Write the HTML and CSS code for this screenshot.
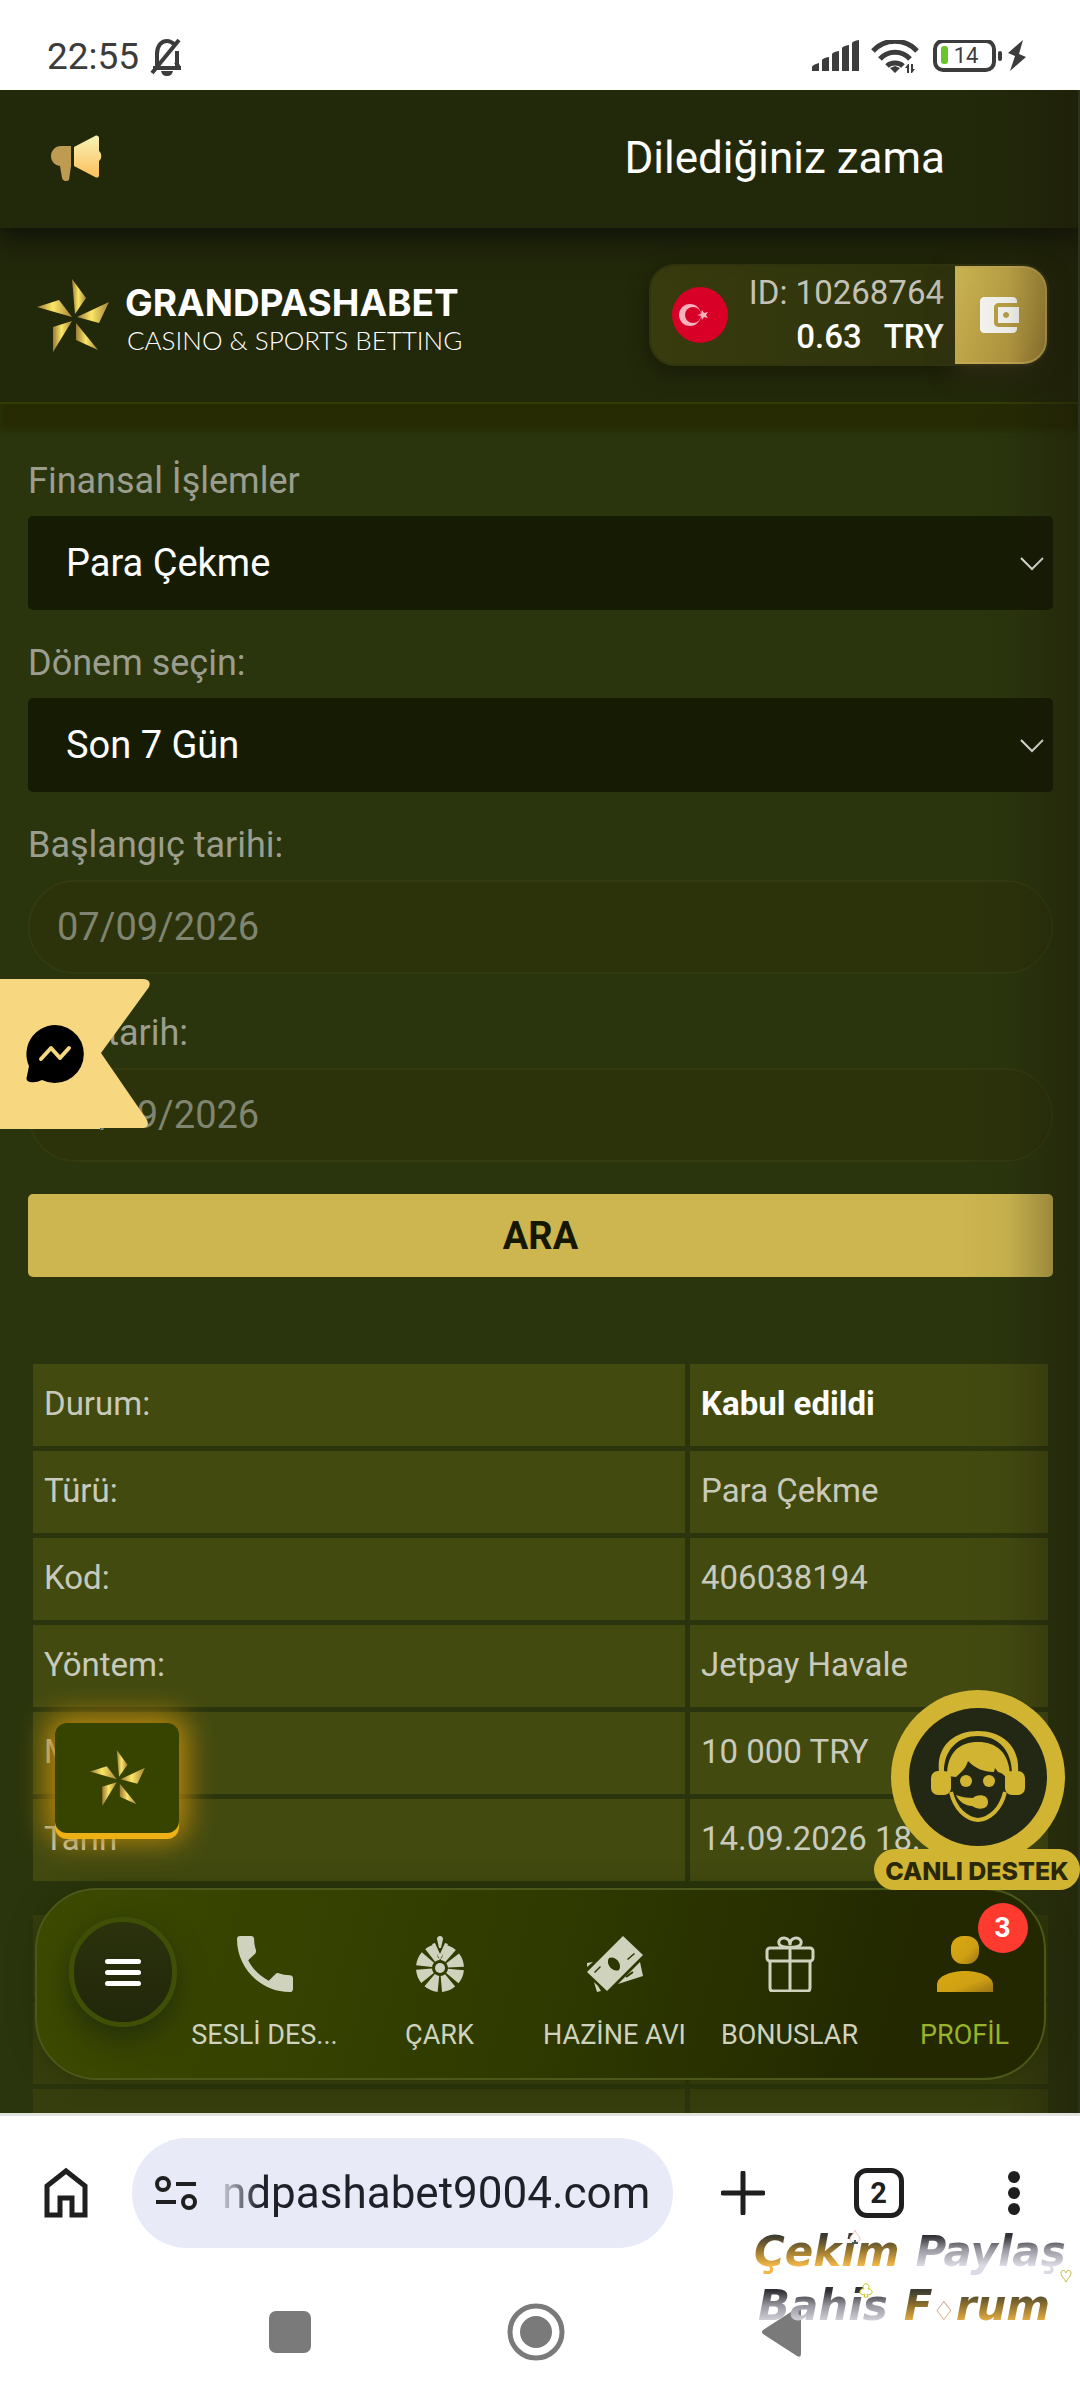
FILE: index.html
```html
<!DOCTYPE html>
<html lang="tr">
<head>
<meta charset="utf-8">
<meta name="viewport" content="width=device-width, initial-scale=1">
<title>Grandpashabet</title>
<link rel="stylesheet" href="styles.css">
</head>
<body>
<svg class="defs" aria-hidden="true">
  <defs>
    <linearGradient id="gold" x1="0" x2="1" y1="0" y2="0"><stop offset="0" stop-color="#9c7a35"/><stop offset=".45" stop-color="#fbe766"/><stop offset="1" stop-color="#a98338"/></linearGradient>
    <linearGradient id="horn" x1="0" x2="0" y1="0" y2="1"><stop offset="0" stop-color="#f7f3b5"/><stop offset="1" stop-color="#fdbf5c"/></linearGradient>
    <linearGradient id="person" x1="0" x2="1" y1="0" y2="1"><stop offset="0" stop-color="#d9a812"/><stop offset=".6" stop-color="#cfa013"/><stop offset="1" stop-color="#9a7414"/></linearGradient>
    <symbol id="star" viewBox="0 0 72 73">
      <path fill="url(#gold)" d="M35 0 49 19 38 35Z"/><path fill="url(#gold)" d="M72 23 62 44 40 38Z"/><path fill="url(#gold)" d="M39 44 61 71 39 61Z"/><path fill="url(#gold)" d="M35 42 16 48V73Z"/><path fill="url(#gold)" d="M0 28 22 21 35 38Z"/>
    </symbol>
  </defs>
</svg>
<div class="phone">
  <header class="status">
    <span class="status-time">22:55</span>
    <svg class="bell" viewBox="0 0 36 40" width="36" height="40"><path d="M8 29V17c0-8 4-13 10-13 3 0 6 2 8 4M28 14v15M4 31h28M30 31l-3-6M30 3 3 36" fill="none" stroke="#3c3c3c" stroke-width="4"/><path d="M12 34h12c-1 4-3 5-6 5s-5-1-6-5Z" fill="#3c3c3c"/></svg>
    <svg class="status-icons" viewBox="0 0 216 34" width="216" height="34" fill="#3c3c3c">
      <path d="M0 31v-4q0-2 7-4v8ZM10 31V20q1-2 7-3v14ZM20 31V14q1-2 7-3v20ZM30 31V8q1-2 7-3v26ZM40 31V3q1-2 7-3v31Z"/>
      <g fill="none" stroke="#3c3c3c" stroke-width="5"><path d="M61 11c12-13 32-13 44 0M68 19c8-9 22-9 30 0M75 26c4-4 12-4 16 0"/></g>
      <path d="m78 28 5-2 5 2-5 5ZM96 24l-3 4h2v5h2V24ZM100 33l3-4h-2v-5h-2v9Z"/>
      <rect x="123" y="1" width="59" height="29" rx="8" fill="none" stroke="#3c3c3c" stroke-width="4"/><rect x="129" y="6" width="7" height="18" rx="3" fill="#6cc42c"/><rect x="186" y="11" width="4" height="10" rx="2"/>
      <text x="154" y="23" text-anchor="middle" font-family="Roboto, sans-serif" font-size="22">14</text>
      <path d="m211 0-15 13 7 3-5 15 16-14-7-3Z"/>
    </svg>
  </header>

  <main class="site">
    <div class="ticker">
      <svg viewBox="0 0 52 46" width="52" height="46"><path fill="#bd9b50" d="M10 11h10v20l-2 14c-3 2-6 1-7-2L9 31C3 30 0 26 0 21S4 11 10 11Z"/><path fill="url(#horn)" d="M23 12 44 1c2-1 4 0 4 2v13c3 2 3 8 0 10v14c0 3-2 3-4 2L23 31Z"/></svg>
      <span>Dilediğiniz zama</span>
    </div>
    <div class="brandbar">
      <a class="brand" href="#">
        <svg width="72" height="73"><use href="#star"/></svg>
        <span class="brand-text"><strong>GRANDPASHABET</strong><small>CASINO &amp; SPORTS BETTING</small></span>
      </a>
      <div class="account">
        <svg class="flag" viewBox="0 0 56 56" width="56" height="56"><circle cx="28" cy="28" r="28" fill="#d80027"/><circle cx="18" cy="28" r="11" fill="#f6b3bd"/><circle cx="21" cy="28" r="8" fill="#d80027"/><path fill="#f6b3bd" d="m25 28 4-1 1-4 2 3 4-1-2 3 2 3-4-1-2 3-1-4Z"/></svg>
        <span class="account-text"><span class="uid">ID: 10268764</span><span class="money"><b>0.63</b><b>TRY</b></span></span>
        <button class="wallet" aria-label="Cüzdan"><svg viewBox="0 0 40 36" width="40" height="36" fill="#f6f6f2"><path d="M4 0h29c2 0 4 2 4 4v2H19c-3 0-5 2-5 4v16c0 2 2 4 5 4h18v2c0 2-2 4-4 4H4c-2 0-4-2-4-4V4c0-2 2-4 4-4Z"/><path fill-rule="evenodd" d="M18 10h21v16H18Zm8 5a3 3 0 1 0 .1 0Z"/></svg></button>
      </div>
    </div>

    <form class="filter">
      <label for="op">Finansal İşlemler</label>
      <div class="select"><select id="op"><option>Para Çekme</option></select><svg viewBox="0 0 24 14" width="24" height="14"><path d="m1 1 11 11L23 1"/></svg></div>
      <label for="period">Dönem seçin:</label>
      <div class="select"><select id="period"><option>Son 7 Gün</option></select><svg viewBox="0 0 24 14" width="24" height="14"><path d="m1 1 11 11L23 1"/></svg></div>
      <label for="from">Başlangıç tarihi:</label>
      <input id="from" type="text" value="07/09/2026">
      <label class="last" for="to">Bitiş tarih:</label>
      <input id="to" type="text" value="14/09/2026">
      <button type="button">ARA</button>
    </form>

    <table class="record">
      <tr><th scope="row">Durum:</th><td><strong>Kabul edildi</strong></td></tr>
      <tr><th scope="row">Türü:</th><td>Para Çekme</td></tr>
      <tr><th scope="row">Kod:</th><td>406038194</td></tr>
      <tr><th scope="row">Yöntem:</th><td>Jetpay Havale</td></tr>
      <tr><th scope="row">Miktar:</th><td>10 000 TRY</td></tr>
      <tr><th scope="row">Tarih</th><td>14.09.2026 18:1</td></tr>
    </table>
    <table class="record dim">
      <tr><th></th><td></td></tr><tr><th></th><td></td></tr><tr><th></th><td></td></tr>
    </table>

    <div class="edge-shade"></div>

    <a class="messenger" href="#" aria-label="Messenger"><svg viewBox="0 0 150 150" width="150" height="150"><path fill="#f7d77f" d="M0 0h142q10 0 7 8L101 74l46 67q3 7-4 8H100v1H0Z"/><path d="M55 46a29 29 0 1 1-13 55q-6 3-12 2-5-1-3-6l2-10A29 29 0 0 1 55 46Z"/><path d="m41 80 10-11 9 10 9-10" fill="none" stroke="#f7d77f" stroke-width="4" stroke-linecap="round" stroke-linejoin="round"/></svg></a>

    <button class="quick" aria-label="Oyunlar"><svg width="55" height="56"><use href="#star"/></svg></button>

    <a class="support" href="#">
      <svg viewBox="0 0 206 176" width="206" height="176">
        <circle cx="104" cy="87" r="87" fill="#d1b532"/><circle cx="104" cy="87" r="69" fill="#232814"/>
        <g fill="#d1b532">
          <path d="M65 82C62 56 80 41 104 41s42 15 40 41l-6 2c0-24-14-38-34-38S69 60 70 84Z"/>
          <path d="M73 86c0-24 13-34 31-34s31 10 32 33l-4 4c-1-4-4-6-8-7l-3-4-1 4c-11 0-19-4-26-11-2 8-8 12-12 16Z"/>
          <rect x="57" y="81" width="20" height="24" rx="7"/><rect x="131" y="81" width="20" height="24" rx="7"/>
          <circle cx="92" cy="91" r="6"/><circle cx="115" cy="91" r="6"/>
          <path d="M82 105c5 2 10 3 17 3 4-4 15-4 15 4s-10 8-16 4c-6 0-13-4-16-11Z"/>
        </g>
        <path d="M77 102c4 17 15 27 27 28 12-1 23-11 27-28" fill="none" stroke="#d1b532" stroke-width="4"/>
      </svg>
      <span>CANLI DESTEK</span>
    </a>

    <nav class="dock">
      <button class="menu" aria-label="Menü"><i></i><i></i><i></i></button>
      <a href="#"><svg viewBox="3 3 18 18" width="56" height="56"><path d="M6.600 10.800c1.400 2.800 3.800 5.100 6.600 6.600l2.200-2.200c.3-.3.700-.4 1-.2 1.100.4 2.300.6 3.600.6.600 0 1 .4 1 1V20c0 .6-.4 1-1 1C10.600 21 3 13.400 3 4c0-.6.4-1 1-1h3.500c.6 0 1 .4 1 1 0 1.300.2 2.500.6 3.600.1.300 0 .7-.2 1z"/></svg><span>SESLİ DES...</span></a>
      <a href="#"><svg viewBox="0 0 56 56" width="56" height="56"><circle cx="28" cy="32" r="16" fill="none" stroke="currentColor" stroke-width="16" stroke-dasharray="9.500 3.066" stroke-dashoffset="-1.500"/><circle cx="28" cy="32" r="5"/><path d="M22 4h12l-4 18h-4Z" fill="#2f3b01"/><path d="M25 3c0-4 6-4 6 0l-2 9h-2ZM20 8l8 16 8-16-3-1-5 11-5-11Z"/></svg><span>ÇARK</span></a>
      <a href="#"><svg viewBox="0 0 56 56" width="56" height="56"><path fill-rule="evenodd" d="M36 0 56 19 20 55 0 36ZM22 22c-4 6 4 15 10 12 4-6-4-15-10-12ZM40 23l1 1 7-6-1-1ZM8 37l6-6-1-1-6 6Z"/><path d="m0 27 6-1-6 5ZM7 46l4 4 3 5-4 1ZM31 48 53 26l3 14Z"/><path d="m39 41 7-5" stroke="#2b3500" stroke-width="2"/></svg><span>HAZİNE AVI</span></a>
      <a href="#"><svg viewBox="0 0 56 56" width="56" height="56" fill="none" stroke="currentColor" stroke-width="3"><rect x="5" y="12" width="46" height="13" rx="3"/><path d="M8 25v27q0 3 3 3h34q3 0 3-3V25M28 12v43M28 11c-9 1-12-2-11-6 2-5 11-4 11 4 0-8 9-9 11-4 1 4-2 7-11 6Z"/></svg><span>BONUSLAR</span></a>
      <a class="on" href="#"><svg viewBox="0 0 56 56" width="56" height="56" fill="url(#person)"><rect x="14" y="0" width="28" height="28" rx="12"/><path d="M0 56v-7c0-9 14-14 28-14s28 5 28 14v7Z"/></svg><span>PROFİL</span><b class="badge">3</b></a>
    </nav>
  </main>

  <footer class="chrome">
    <div class="toolbar">
      <button aria-label="Ana sayfa"><svg viewBox="0 0 46 52" width="46" height="52"><path d="M4 48V19L23 4l19 15v29H29V31H17v17Z" fill="none" stroke="#1f1f1f" stroke-width="5"/></svg></button>
      <div class="address">
        <svg viewBox="0 0 42 36" width="42" height="36" fill="none" stroke="#1f1f1f" stroke-width="4"><circle cx="8" cy="9" r="6"/><path d="M21 9h20M1 27h20"/><circle cx="34" cy="27" r="6"/></svg>
        <span class="url">ndpashabet9004.com</span>
      </div>
      <div class="tools">
        <button aria-label="Yeni sekme"><svg viewBox="0 0 44 44" width="44" height="44"><path d="M22 2v40M2 22h40" stroke="#1f1f1f" stroke-width="5" stroke-linecap="round"/></svg></button>
        <button class="tabs" aria-label="Sekmeler">2</button>
        <button aria-label="Diğer"><svg viewBox="0 0 44 44" width="44" height="44" fill="#1f1f1f"><circle cx="22" cy="6" r="6"/><circle cx="22" cy="22" r="6"/><circle cx="22" cy="38" r="6"/></svg></button>
      </div>
    </div>
    <div class="system">
      <svg viewBox="0 0 60 60" width="60" height="60"><rect x="9" y="9" width="42" height="42" rx="7"/></svg>
      <svg viewBox="0 0 60 60" width="60" height="60"><circle cx="30" cy="30" r="26" fill="none" stroke="#7a7a7a" stroke-width="5"/><circle cx="30" cy="30" r="16"/></svg>
      <svg viewBox="0 0 60 60" width="60" height="60"><path d="M11 28 45 6q4-2 4 2v44q0 4-4 2L11 32q-2-2 0-4Z"/></svg>
    </div>
    <div class="watermark">
      <p><span class="amber">Çekim</span><span class="silver">Paylaş</span></p>
      <p><span class="silver">Bahis</span><span class="amber">F<em>♢</em>rum</span></p>
      <svg class="suit spade" viewBox="0 0 12 16" width="12" height="16"><path d="M6 1c1 4 5 6 5 9s-4 3-5 1c-1 2-5 2-5-1s4-5 5-9Z" fill="#fff" stroke="#f0c4c4"/><path d="M3 14h6M6 11v3" stroke="#4d5a5a" stroke-width="2"/></svg>
      <svg class="suit club" viewBox="0 0 14 16" width="14" height="16"><path d="M5 7a3 3 0 1 1 4 0 3 3 0 1 1-1 5l1 3H5l1-3a3 3 0 1 1-1-5Z" fill="#fff" stroke="#c9c92c"/></svg>
      <svg class="suit heart" viewBox="0 0 12 14" width="12" height="14"><path d="M6 13C4 9 1 7 1 4s4-4 5 0c1-4 5-3 5 0s-3 5-5 9Z" fill="#fff" stroke="#c6bd4a"/></svg>
    </div>
  </footer>
</div>
</body>
</html>
```
FILE: styles.css
```css
* { box-sizing: border-box; }
body { margin: 0; font-family: Roboto, sans-serif; background: #fff; }
.defs { position: absolute; width: 0; height: 0; }
button { font: inherit; border: 0; padding: 0; background: none; }
a { color: inherit; text-decoration: none; }
svg { display: block; flex: none; }

.phone { display: flex; flex-direction: column; height: 100vh; }

/* phone status bar */
.status { flex: none; display: flex; align-items: center; height: 90px; padding: 24px 52px 0 47px; color: #3c3c3c; }
.status-time { font-size: 37px; line-height: 40px; }
.bell { margin-left: 10px; }
.status-icons { margin-left: auto; }

/* site */
.site { position: relative; flex: 1; min-height: 0; overflow: hidden; background: #2a350d; }
.ticker { position: relative; z-index: 1; display: flex; align-items: center; justify-content: space-between; height: 138px; padding: 0 135px 2px 51px; background: #22280a; color: #fff; font-size: 44px; line-height: 56px; box-shadow: 0 4px 28px 4px #0c0e08; }
.brandbar { display: flex; align-items: center; justify-content: space-between; height: 176px; padding: 0 31px 0 37px; background: #22280a; border-bottom: 2px solid #343c06; box-shadow: 0 26px 6px #262b04; }
.brand { display: flex; align-items: center; gap: 16px; color: #fff; }
.brand-text { display: flex; flex-direction: column; gap: 2px; padding-top: 10px; font-family: Inter, sans-serif; }
.brand strong { font-size: 37px; line-height: 38px; }
.brand small { padding-left: 2px; font-family: Lato, sans-serif; font-size: 26px; font-weight: 300; line-height: 32px; }
.account { display: flex; align-items: center; height: 102px; padding-left: 21px; border-radius: 26px; background: linear-gradient(90deg, #383b0d, #2b300d); border: 2px solid #30350f; box-shadow: 0 6px 20px #171b08; }
.account-text { display: flex; flex-direction: column; align-items: flex-end; margin: 0 11px 0 21px; color: #fff; font-size: 33px; line-height: 44px; }
.uid { color: #c2c2b6; }
.money { display: flex; gap: 22px; }
.money b { font-weight: 500; }
.wallet { display: flex; align-items: center; justify-content: center; align-self: stretch; width: 92px; border-radius: 0 24px 24px 0; border: 2px solid #c5a854; border-left: 0; background: linear-gradient(120deg, #c9b351, #b3973f 75%, #a4873a); box-shadow: 0 8px 24px #353018; }

.filter { display: flex; flex-direction: column; padding: 49px 27px 0 28px; }
.filter label { height: 63px; padding-top: 4px; color: #9b9e8e; font-size: 36px; line-height: 48px; }
.filter label.last { height: 69px; padding-top: 10px; }
.select { position: relative; margin-bottom: 25px; }
.filter select, .filter input { display: block; width: 100%; height: 94px; font: 38px/46px Roboto, sans-serif; }
.filter select { appearance: none; padding: 0 38px; border: 0; border-radius: 5px; background: #161c04; color: #fff; }
.select svg { position: absolute; right: 9px; top: 41px; fill: none; stroke: #f0f0ea; stroke-width: 2; }
.filter input { margin-bottom: 25px; padding: 0 27px; border: 2px solid #333a10; border-radius: 47px; background: #2c330b; color: #7f8570; }
.filter button { height: 83px; margin-top: 7px; border-radius: 5px; background: #cdb650; color: #151800; font-size: 38px; font-weight: 700; line-height: 46px; }

.record { width: calc(100% - 55px); margin: 82px 0 0 28px; border-spacing: 5px; table-layout: fixed; color: #c8cabc; font-size: 33px; line-height: 40px; }
.record th, .record td { height: 82px; padding: 0 11px 2px; background: #434a10; text-align: left; font-weight: 400; }
.record th { width: 652px; }
.record strong { color: #fff; font-weight: 700; }
.record.dim { margin-top: 24px; }
.record.dim th, .record.dim td { background: #373e0d; }
.edge-shade { position: absolute; z-index: 2; inset: 0 0 0 auto; width: 120px; pointer-events: none; background: linear-gradient(90deg, #1a160000, #1a16080c 40%, #1a160866); border-right: 2px solid #2c321c; }

/* floating widgets */
.messenger { position: absolute; left: 0; top: 889px; }
.quick { position: absolute; left: 55px; bottom: 280px; display: flex; align-items: center; justify-content: center; width: 124px; height: 110px; border-radius: 12px; background: #364400; box-shadow: 0 6px 0 #edb015, 0 0 28px 8px #b8860b; }
.support { position: absolute; z-index: 3; right: 0; bottom: 223px; width: 206px; }
.support span { display: block; height: 41px; margin-top: -17px; border-radius: 21px; background: #d1b532; color: #2a2808; text-align: center; font: 800 25px/44px Inter, sans-serif; }

.dock { position: absolute; z-index: 2; left: 35px; right: 34px; bottom: 33px; display: flex; height: 192px; padding-left: 34px; border: 2px solid #4c571a; border-radius: 62px; background: linear-gradient(105deg, #3c4a00, #2e3a00 50%, #232800 85%); color: #cfd3bd; box-shadow: 0 0 24px #20270480; }
.menu { display: flex; flex-direction: column; align-items: center; justify-content: center; gap: 6px; flex: none; width: 108px; height: 110px; margin: 27px 0 0 -2px; border: 5px solid #3f4f06; border-radius: 55px; background: linear-gradient(#2b320c, #21270a); box-shadow: 0 12px 28px #26300a; }
.menu i { width: 36px; height: 5px; border-radius: 3px; background: #fff; }
.dock a { position: relative; flex: 1 1 0; display: flex; flex-direction: column; align-items: center; gap: 25px; padding-top: 46px; font-size: 27px; line-height: 36px; white-space: nowrap; }
.dock a:last-child { margin-right: -8px; }
.dock svg { fill: currentColor; }
.dock svg[fill="none"] { fill: none; }
.dock .on svg { fill: url(#person); }
.dock .on { color: #98b328; }
.badge { position: absolute; left: calc(50% + 13px); top: 13px; width: 50px; height: 50px; border-radius: 25px; background: #ff3b30; color: #fff; text-align: center; font: 700 28px/50px Roboto, sans-serif; }

/* browser toolbar and system keys */
.chrome { position: relative; flex: none; border-top: 3px solid #e0e3dc; background: #fff; }
.toolbar { display: flex; align-items: center; height: 154px; padding-left: 43px; }
.address { display: flex; align-items: center; flex: 1 1 0; height: 110px; margin-left: 43px; padding: 0 23px; border-radius: 55px; background: #e8ebf7; gap: 25px; }
.url { font-size: 44px; line-height: 56px; color: transparent; background: linear-gradient(90deg, #c9ccd8, #1f2028 38px); background-clip: text; }
.tools { display: flex; align-items: center; justify-content: space-between; width: 313px; margin: 0 44px 0 50px; }
.tools button:first-child { margin-left: -2px; }
.tabs { width: 50px; height: 50px; border: 5px solid #1f1f1f; border-radius: 13px; color: #1f1f1f; font: 700 29px/40px Roboto, sans-serif; }
.system { display: flex; align-items: center; justify-content: space-around; height: 130px; padding: 0 175px 6px 167px; fill: #7a7a7a; }
.watermark { position: absolute; right: 0; top: 109px; width: 326px; font-family: "DejaVu Sans", sans-serif; font-size: 42px; font-style: italic; font-weight: 700; line-height: 54px; }
.watermark p { display: flex; gap: 16px; margin: 0; }
.watermark p + p { padding-left: 4px; }
.watermark span { color: transparent; background-clip: text; }
.amber { background-image: linear-gradient(#3b3b32 20%, #8f722e 45%, #f2b649 75%); }
.silver { background-image: linear-gradient(#2f2f34 20%, #98969e 45%, #dcd9e4 75%); }
.watermark em { color: #f0c9c9; font-style: normal; font-weight: 400; font-size: 26px; }
.suit { position: absolute; }
.spade { left: 95px; top: 4px; }
.club { left: 105px; top: 57px; }
.heart { right: 8px; top: 44px; }
```
